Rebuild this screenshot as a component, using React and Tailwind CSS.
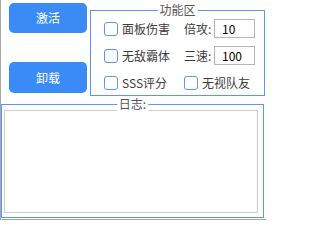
import React, { useState } from 'react';

const font = { fontFamily: '"Noto Sans CJK SC", "Noto Sans", sans-serif' };

function Check({ label, checked, onChange }) {
  return (
    <label className="flex items-center cursor-pointer select-none">
      <span
        className={`w-[14px] h-[14px] rounded-[3px] border-[1.5px] border-[#5b96f2] flex items-center justify-center ${checked ? 'bg-[#3a8bf5]' : 'bg-white'}`}
        onClick={onChange}
      >
        {checked && (
          <svg viewBox="0 0 10 10" className="w-[9px] h-[9px]">
            <path d="M1.5 5l2.5 2.5L8.5 2.5" stroke="white" strokeWidth="1.6" fill="none" />
          </svg>
        )}
      </span>
      <span className="ml-[4px] text-[12px] leading-none text-[#3c3c3c]">{label}</span>
    </label>
  );
}

function Field({ label, value, onChange }) {
  return (
    <div className="flex items-center">
      <span className="w-[30px] text-[12px] leading-none text-[#3c3c3c]">{label}</span>
      <input
        value={value}
        onChange={e => onChange(e.target.value)}
        className="w-[41px] h-[19px] border border-[#b4b4b4] bg-white pl-[7px] text-[12px] text-black outline-none"
      />
    </div>
  );
}

export default function App() {
  const [checks, setChecks] = useState({ dmg: false, god: false, sss: false, team: false });
  const [atk, setAtk] = useState('10');
  const [speed, setSpeed] = useState('100');
  const toggle = key => setChecks(prev => ({ ...prev, [key]: !prev[key] }));

  return (
    <div className="w-[266px] h-[220px] bg-white border-l border-b border-[#a8a8a8] overflow-hidden" style={font}>
      <div className="flex pl-[8px] pt-[3px]">
        <div className="w-[78px] flex flex-col gap-[29px]">
          <button className="h-[30px] rounded-[5px] bg-[#3a8bf5] text-white text-[12px]">激活</button>
          <button className="h-[31px] rounded-[5px] bg-[#3a8bf5] text-white text-[12px]">卸载</button>
        </div>

        <div className="relative ml-[3px] mt-[7px] w-[175px] h-[86px] border border-[#5b96f2]">
          <span className="absolute -top-[8px] left-1/2 -translate-x-1/2 bg-white px-[2px] text-[12px] leading-[14px] text-[#555]">功能区</span>
          <div className="pt-[4px] pl-[13px]">
            <div className="flex items-center h-[27px]">
              <div className="w-[80px]">
                <Check label="面板伤害" checked={checks.dmg} onChange={() => toggle('dmg')} />
              </div>
              <Field label="倍攻:" value={atk} onChange={setAtk} />
            </div>
            <div className="flex items-center h-[27px]">
              <div className="w-[80px]">
                <Check label="无敌霸体" checked={checks.god} onChange={() => toggle('god')} />
              </div>
              <Field label="三速:" value={speed} onChange={setSpeed} />
            </div>
            <div className="flex items-center h-[27px]">
              <div className="w-[80px]">
                <Check label="SSS评分" checked={checks.sss} onChange={() => toggle('sss')} />
              </div>
              <Check label="无视队友" checked={checks.team} onChange={() => toggle('team')} />
            </div>
          </div>
        </div>
      </div>

      <div className="relative mt-[8px] ml-[0px] w-[263px] h-[114px] border border-[#5b96f2] pt-[5px] pl-[2px] pr-[5px] pb-[4px]">
        <span className="absolute -top-[8px] left-1/2 -translate-x-1/2 bg-white px-[2px] text-[12px] leading-[14px] text-[#555]">日志:</span>
        <textarea className="w-full h-full border-[1.5px] border-[#c9ccd2] resize-none outline-none text-[12px] p-1" />
      </div>
    </div>
  );
}
